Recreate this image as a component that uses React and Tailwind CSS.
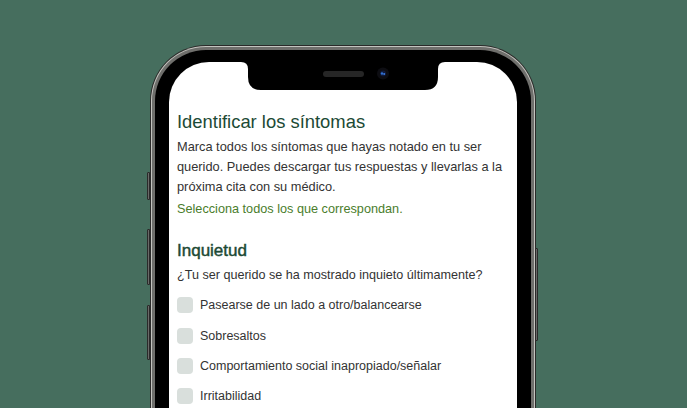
import React from "react";

const items = [
  "Pasearse de un lado a otro/balancearse",
  "Sobresaltos",
  "Comportamiento social inapropiado/señalar",
  "Irritabilidad",
];

export default function App() {
  return (
    <div className="relative w-[687px] h-[408px] overflow-hidden bg-[#466e5e] flex justify-start pl-[150px] pt-[45px]" style={{ fontFamily: '"Liberation Sans", Arial, sans-serif' }}>
      <div className="relative w-[386px] h-[420px] shrink-0">
        {/* side buttons */}
        <div className="absolute left-[-3px] top-[127px] w-[3px] h-[28px] rounded-l-[1px] bg-[#6a6a68] border border-[#2a2a2a]" />
        <div className="absolute left-[-3px] top-[184px] w-[3px] h-[56px] rounded-l-[1px] bg-[#6a6a68] border border-[#2a2a2a]" />
        <div className="absolute left-[-3px] top-[260px] w-[3px] h-[55px] rounded-l-[1px] bg-[#6a6a68] border border-[#2a2a2a]" />
        <div className="absolute right-[-2px] top-[203px] w-[3px] h-[93px] rounded-r-[1px] bg-[#6a6a68] border border-[#2a2a2a]" />
        <div className="h-full rounded-t-[56px] bg-[#2b2b2a] p-[1px]">
          <div className="h-full rounded-t-[55px] bg-[#c4c4bf] p-[1px]">
            <div className="h-full rounded-t-[54px] bg-[#6f6f6c] p-[3px]">
              <div className="h-full rounded-t-[51px] bg-black pt-[12px] px-[14px]">
                <div className="relative h-full rounded-t-[40px] bg-white overflow-hidden">
                  {/* notch */}
                  <svg className="absolute left-1/2 -translate-x-1/2 top-0" width="204" height="29" viewBox="0 0 204 29">
                    <path d="M0 0 H204 Q197 0 197 7 V15 Q197 28 184 28 H20 Q7 28 7 15 V7 Q7 0 0 0 Z" fill="#000" />
                    <rect x="82" y="9" width="41" height="6" rx="3" fill="#262626" />
                    <circle cx="142" cy="11.5" r="6" fill="#0d0d12" />
                    <circle cx="142" cy="11.5" r="3" fill="#101a3a" />
                    <circle cx="141" cy="11.5" r="1.2" fill="#2f6fd0" />
                    <circle cx="143.2" cy="12" r="1" fill="#3a7ae0" />
                  </svg>
                  <div className="pt-[48px] pl-[8px] pr-[8px]">
                    <h1 className="text-[18.4px] leading-[24px] text-[#1c4a35]">Identificar los síntomas</h1>
                    <p className="mt-[3px] text-[12.8px] leading-[20px] text-[#333333]">
                      Marca todos los síntomas que hayas notado en tu ser querido. Puedes descargar tus respuestas y llevarlas a la próxima cita con su médico.
                    </p>
                    <p className="mt-[2px] text-[12.7px] leading-[20px] text-[#4a7d2b]">Selecciona todos los que correspondan.</p>
                    <h2 className="mt-[20px] text-[17px] leading-[24px] text-[#1c4a35] [-webkit-text-stroke:0.45px_#1c4a35]">Inquietud</h2>
                    <p className="mt-[2px] text-[12.6px] leading-[20px] text-[#333333]">¿Tu ser querido se ha mostrado inquieto últimamente?</p>
                    <ul className="mt-[5px]">
                      {items.map((t) => (
                        <li key={t} className="flex items-center h-[30.4px]">
                          <span className="w-[16px] h-[16px] rounded-[4px] bg-[#d9dfdc] shrink-0" />
                          <span className="ml-[7px] text-[12.5px] leading-[20px] text-[#333333]">{t}</span>
                        </li>
                      ))}
                    </ul>
                  </div>
                </div>
              </div>
            </div>
          </div>
        </div>
      </div>
    </div>
  );
}
